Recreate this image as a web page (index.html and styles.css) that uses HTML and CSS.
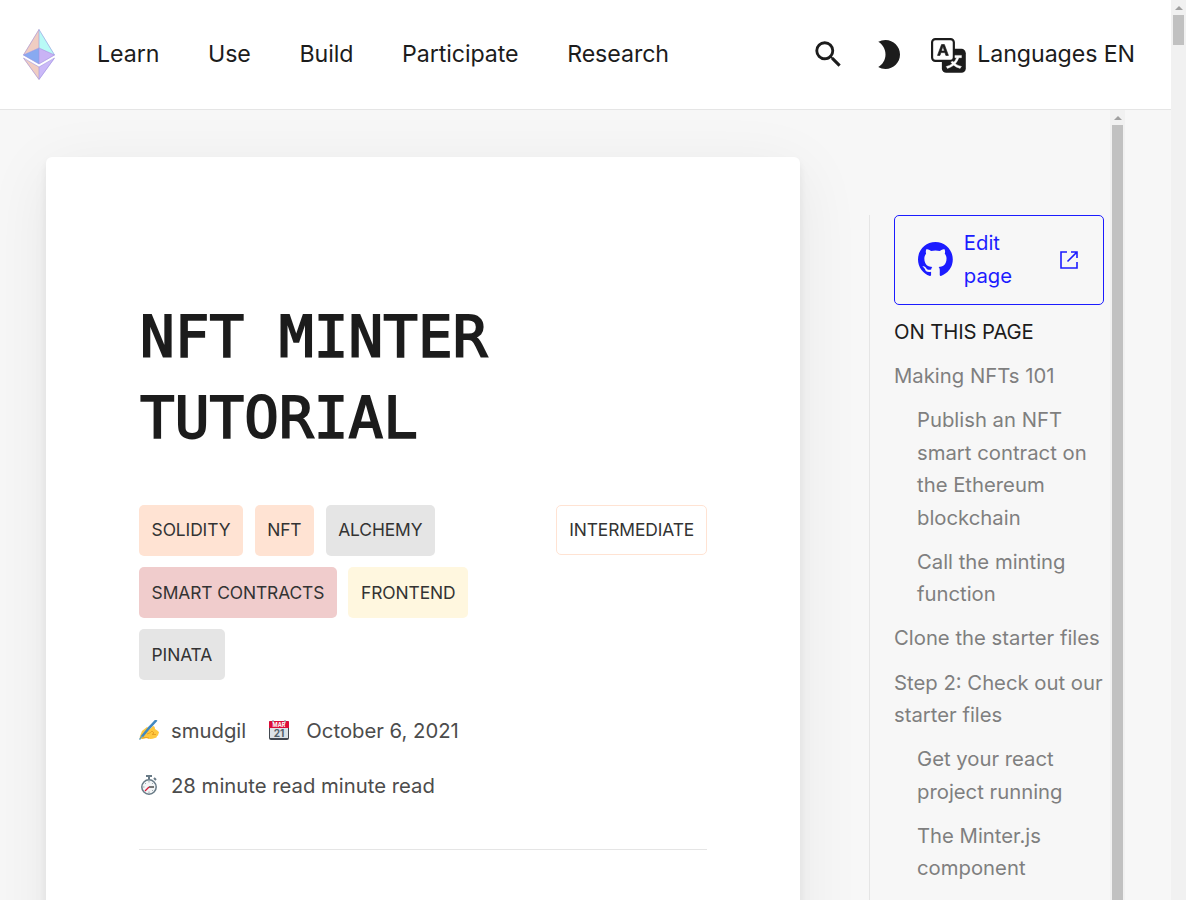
FILE: index.html
```html
<!DOCTYPE html>
<html lang="en">
<head>
<meta charset="utf-8">
<title>NFT Minter Tutorial</title>
<link rel="stylesheet" href="styles.css">
</head>
<body>
<div class="viewport">
  <div class="page">
    <header class="nav">
      <svg class="logo" viewBox="0 0 32 51">
        <path fill="#f0cdc2" d="M16 0 0 26l16-7z"/><path fill="#b8faf6" d="M16 0v19l16 7z"/>
        <path fill="#88aaf1" d="M0 26l16-7v16z"/><path fill="#c9b3f5" d="M32 26l-16-7v16z"/>
        <path fill="#f0cdc2" d="M0 29l16 9v13z"/><path fill="#cbb9f8" d="M32 29l-16 9v13z"/>
        <path class="logo-lines" d="M16 .5.5 26 16 35l15.500-9zM.5 26 16 19l15.500 7M16 .5V35M.5 29 16 38l15.500-9L16 50.500zM16 38v12"/>
      </svg>
      <nav class="links"><a>Learn</a><a>Use</a><a>Build</a><a>Participate</a><a>Research</a></nav>
      <div class="tools">
        <svg class="icon" viewBox="0 0 24 24"><path d="M15.500 14h-.79l-.28-.27A6.471 6.471 0 0 0 16 9.500 6.500 6.500 0 1 0 9.500 16c1.610 0 3.090-.59 4.230-1.570l.27.28v.79l5 4.990L20.490 19l-4.990-5zm-6 0C7.010 14 5 11.990 5 9.500S7.010 5 9.500 5 14 7.010 14 9.500 11.990 14 9.500 14z"/></svg>
        <svg class="icon moon" viewBox="0 0 24 24"><path d="M10 2c-1.820 0-3.530.5-5 1.350C7.990 5.080 10 8.300 10 12s-2.010 6.920-5 8.650C6.470 21.500 8.180 22 10 22c5.520 0 10-4.480 10-10S15.520 2 10 2z"/></svg>
        <svg class="icon translate" viewBox="0 0 16 16"><rect x="5" y="5" width="11" height="11" rx="2"/><rect x=".5" y=".5" width="10" height="10" rx="1.500" fill="#fff" stroke="#1c1c1c"/><path class="letter-a" d="M4.545 6.714 4.110 8H3l1.862-5h1.284L8 8H6.833l-.435-1.286H4.545zm1.634-.736L5.500 3.956h-.049l-.679 2.022H6.180z"/><path fill="#fff" stroke="#fff" stroke-width=".2" d="M9.138 10.995c.193.301.402.583.63.846-.748.575-1.673 1.001-2.768 1.292.178.217.451.635.555.867 1.125-.359 2.080-.844 2.886-1.494.777.665 1.739 1.165 2.930 1.472.133-.254.414-.673.629-.89-1.125-.253-2.057-.694-2.820-1.284.681-.747 1.222-1.651 1.621-2.757H14V8h-3v1.047h.765c-.318.844-.74 1.546-1.272 2.130a6.066 6.066 0 0 1-.415-.492 1.988 1.988 0 0 1-.94.31z"/></svg>
        <span class="lang">Languages EN</span>
      </div>
    </header>
    <div class="content">
      <main class="card">
        <h1>NFT MINTER TUTORIAL</h1>
        <div class="tag-row">
          <div class="tags"><span class="tag orange">SOLIDITY</span><span class="tag orange">NFT</span><span class="tag">ALCHEMY</span><span class="tag red">SMART CONTRACTS</span><span class="tag yellow">FRONTEND</span><span class="tag">PINATA</span></div>
          <span class="level">INTERMEDIATE</span>
        </div>
        <div class="meta">
          <svg class="emoji" viewBox="0 0 20 20"><path fill="#ffc83d" d="M3 11 8 7l3 2 3-3q2 0 2 3l3 2q2 2 0 3 1 1-1 2 0 2-2 2-5 2-8 0l-5 1q-3 0-2-3z"/><path d="M8 14q4-1 5-3l2 2-2 1.500h4M3 18q4-1 7 0" fill="none" stroke="#e69d20" stroke-width=".9"/><path d="M17.500 0Q14 4 10 8L3 16.500" fill="none" stroke="#4289c1" stroke-width="2.600"/><path d="M3 16 .5 19.500" stroke="#6aa0b8" stroke-width="1.500"/></svg>
          <span>smudgil</span>
          <svg class="emoji cal" viewBox="0 0 20 20"><rect y="1" width="20" height="19" rx="2" fill="#424850"/><path fill="#dce2e6" d="M1 8h18v10H1z"/><path fill="#dc0d38" d="M0 8V2q0-1 1-1h18q1 0 1 1v6z"/><path d="M4 0v3M16 0v3" stroke="#a4b0b8" stroke-width="1.500"/><text x="10" y="7.300" class="cal-month">MAR</text><text x="10" y="17.300" class="cal-day">21</text></svg>
          <span>October 6, 2021</span>
        </div>
        <div class="meta second">
          <svg class="emoji" viewBox="0 0 20 20"><path d="M7 1h6M10 1v3M15 3l2 2" stroke="#687a86" stroke-width="2" fill="none"/><circle cx="10" cy="12" r="7.200" fill="#f3f5f6" stroke="#687a86" stroke-width="1.500"/><path d="M10 6v1.500M10 16.500V18M4 12h1.500M6 8l1 1M14 8l-1 1M14 16l-1-1" stroke="#7c8a93" stroke-width=".7"/><path d="M10 12h5" stroke="#222" stroke-width="1.200"/><path d="M10 12l-4 4" stroke="#db1638" stroke-width="1.300"/></svg>
          <span>28 minute read minute read</span>
        </div>
        <hr>
      </main>
      <aside class="side">
        <div class="toc">
          <a class="edit">
            <svg class="github" viewBox="0 0 16 16"><path d="M8 0C3.580 0 0 3.580 0 8c0 3.540 2.290 6.530 5.470 7.590.4.070.55-.17.55-.38 0-.19-.01-.82-.01-1.490-2.010.37-2.530-.49-2.690-.94-.09-.23-.48-.94-.82-1.130-.28-.15-.68-.52-.01-.53.63-.01 1.080.58 1.230.82.72 1.210 1.870.87 2.330.66.070-.52.28-.87.51-1.070-1.780-.2-3.640-.89-3.640-3.950 0-.87.31-1.590.82-2.150-.08-.2-.36-1.020.08-2.120 0 0 .67-.21 2.200.82.64-.18 1.320-.27 2-.27s1.360.09 2 .27c1.530-1.040 2.200-.82 2.200-.82.44 1.100.16 1.920.08 2.120.51.56.82 1.270.82 2.150 0 3.070-1.870 3.750-3.650 3.950.29.25.54.73.54 1.480 0 1.070-.01 1.930-.01 2.200 0 .21.15.46.55.38A8.010 8.010 0 0 0 16 8c0-4.420-3.580-8-8-8z"/></svg>
            <span class="edit-text">Edit page</span>
            <svg class="external" viewBox="0 0 18 18"><path d="M7 1H1v16h16v-6M11 1h6v6M17 1 7.500 10.500"/></svg>
          </a>
          <h2>ON THIS PAGE</h2>
          <ul>
            <li>Making NFTs 101</li>
            <li class="sub">Publish an NFT smart contract on the Ethereum blockchain</li>
            <li class="sub">Call the minting function</li>
            <li>Clone the starter files</li>
            <li>Step 2: Check out our starter files</li>
            <li class="sub">Get your react project running</li>
            <li class="sub">The Minter.js component</li>
          </ul>
        </div>
        <div class="bar"><i class="arrow"></i><i class="thumb long"></i></div>
      </aside>
    </div>
  </div>
  <div class="bar main-bar"><i class="arrow"></i><i class="thumb"></i></div>
</div>
</body>
</html>
```
FILE: styles.css
```css
* { box-sizing: border-box; }
body { margin: 0; overflow: hidden; font: 20.3px/32.48px Inter, sans-serif; color: #1c1c1c; }
.viewport { display: flex; height: 900px; overflow: hidden; }
.page { width: 1171px; height: 900px; display: flex; flex-direction: column; background: #f7f7f7; }
.nav { height: 110px; flex: none; display: flex; align-items: center; background: #fff; border-bottom: 1px solid #e5e5e5; padding: 0 36px 0 23px; font-size: 23.2px; line-height: 37px; letter-spacing: -.08px; position: relative; z-index: 1; }
.logo { width: 32px; height: 51px; margin-right: 42px; }
.logo-lines { fill: none; stroke: #a093df; stroke-width: .8; opacity: .75; }
.links { display: flex; gap: 48.700px; }
.tools { display: flex; align-items: center; margin-left: auto; }
.icon { width: 34.8px; height: 34.8px; fill: #1c1c1c; flex: none; }
.moon { margin-left: 25px; }
.translate { margin: 2px 0 0 25px; }
.letter-a { stroke: #1c1c1c; stroke-width: .3; }
.lang { margin-left: 11.600px; }
.content { display: flex; flex: 1; min-height: 0; overflow: hidden; }
.card { width: 754px; height: 1000px; flex: none; margin: 47px 0 0 46px; padding: 140px 93px 0; background: #fff; border-radius: 6px; box-shadow: 0 14px 66px rgba(0,0,0,.07), 0 10px 17px rgba(0,0,0,.03), 0 4px 7px rgba(0,0,0,.05); }
h1 { margin: 0 0 45.500px; padding-left: 1px; font: 400 57.5px/81.2px "DejaVu Sans Mono", monospace; letter-spacing: .12px; -webkit-text-stroke: 1.8px #1c1c1c; }
.tag-row { display: flex; justify-content: space-between; align-items: flex-start; font-size: 17.4px; line-height: 27.84px; letter-spacing: -.1px; color: #333; }
.tags { display: flex; flex-wrap: wrap; gap: 11.600px; width: 372px; }
.tag { padding: 11.400px 12.600px; border-radius: 5px; background: #e5e5e5; }
.orange { background: #ffe3d3; }
.red { background: #f0cccc; }
.yellow { background: #fff7df; }
.level { padding: 10.200px 11.800px; border: 1px solid #ffe3d3; border-radius: 5px; }
.meta { display: flex; align-items: center; margin-top: 35.500px; color: #4c4c4c; }
.second { margin-top: 22.500px; }
.emoji { width: 20px; height: 20px; margin: 0 12px 3px 0; }
.cal { margin: 0 17.500px 3px 22.700px; }
.cal-month { font: 700 5.500px Inter, sans-serif; text-anchor: middle; fill: #fff; }
.cal-day { font: 700 10px Inter, sans-serif; text-anchor: middle; fill: #52606a; }
hr { border: 0; height: 1px; background: #e5e5e5; margin: 46px 0 0; }
.side { display: flex; flex: none; width: 256px; margin-left: 69px; }
.toc { width: 241px; height: 900px; margin-top: 105px; border-left: 1px solid #e5e5e5; padding: 0 6px 0 24px; color: #7f7f7f; }
.edit { display: flex; align-items: center; height: 90px; border: 1px solid #1c1cff; border-radius: 5px; padding: 0 25px 1px 23px; color: #1c1cff; }
.github { width: 34.8px; height: 34.8px; fill: #1c1cff; margin-right: 11px; flex: none; }
.edit-text { width: 60px; }
.external { width: 18px; height: 18px; margin-left: auto; fill: none; stroke: #1c1cff; stroke-width: 1.6; }
h2 { margin: 11px 0 11.600px; font: inherit; letter-spacing: -.1px; color: #1c1c1c; }
ul { list-style: none; margin: 0; padding: 0; }
li { margin-bottom: 11.650px; margin-right: -5px; }
.sub { margin-left: 23px; }
.bar { width: 15px; height: 900px; flex: none; background: #f1f1f1; display: flex; flex-direction: column; align-items: center; }
.arrow { width: 0; height: 0; margin: 6px 0 5px; border: 4px solid transparent; border-top: 0; border-bottom-color: #a0a0a0; }
.thumb { width: 11px; height: 30px; background: #c1c1c1; }
.long { height: 1200px; flex: none; }
```
